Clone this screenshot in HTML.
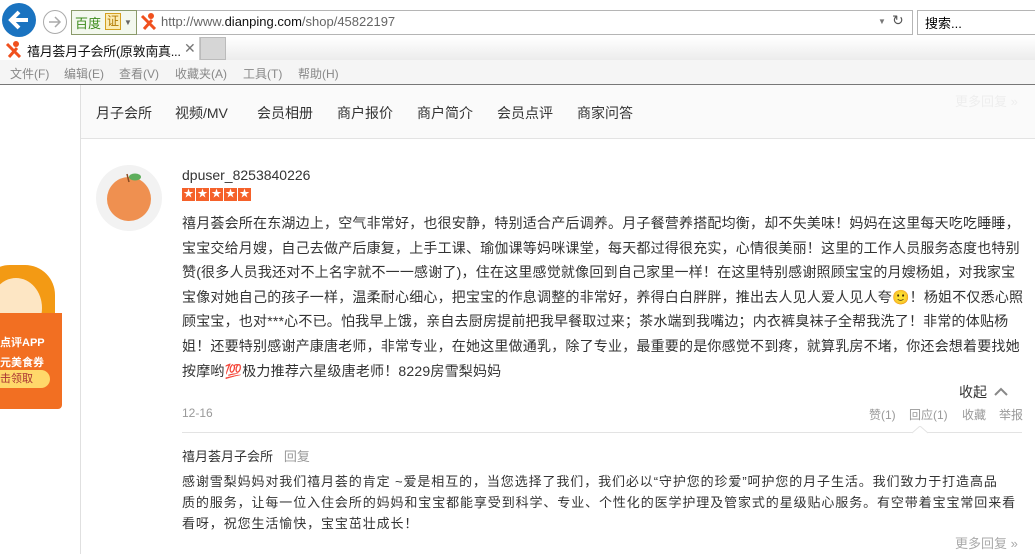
<!DOCTYPE html>
<html><head><meta charset="utf-8"><style>
body{margin:0;width:1035px;height:554px;overflow:hidden;background:#fff;font-family:"Liberation Sans","Noto Sans CJK SC",sans-serif;position:relative}
.a{position:absolute}
.cn{font-family:"Liberation Sans","Noto Sans CJK SC",sans-serif}
.nw{white-space:nowrap}
</style></head><body>
<!-- address bar -->
<div class="a" style="left:0;top:0;width:1035px;height:39px;background:#fff"></div>
<div class="a" style="left:2px;top:3px;width:34px;height:34px;border-radius:50%;background:#1a73c0"></div>
<svg class="a" style="left:2px;top:3px" width="34" height="34"><path d="M26 17H10M17 9l-8 8 8 8" stroke="#fff" stroke-width="4" fill="none"/></svg>
<div class="a" style="left:43px;top:10px;width:22px;height:22px;border-radius:50%;border:1px solid #aaa"></div>
<svg class="a" style="left:44px;top:11px" width="22" height="22"><path d="M5 11h11M11 6l5 5-5 5" stroke="#aaa" stroke-width="1.5" fill="none"/></svg>
<div class="a" style="left:71px;top:10px;width:840px;height:23px;border:1px solid #b5b5b5"></div>
<div class="a" style="left:71px;top:10px;width:64px;height:23px;border:1px solid #8a9a6a;background:#f3f8ee"></div>
<div class="a cn" style="left:75px;top:13px;font-size:13px;color:#3c8c1c">百度</div>
<div class="a cn" style="left:105px;top:13px;width:14px;height:15px;border:1px solid #d4a020;background:#fbecb4;font-size:12px;color:#b07800;text-align:center;line-height:15px">证</div>
<div class="a" style="left:124px;top:18px;font-size:8px;color:#666">▼</div>
<svg class="a" style="left:140px;top:12px" width="17" height="18"><circle cx="11" cy="4" r="3" fill="#f0501e"/><path d="M2 4l8 8M12 8l-8 9M10 12l5 5" stroke="#f0501e" stroke-width="3" fill="none"/></svg>
<div class="a" style="left:161px;top:14px;font-size:13px;color:#666">http://www.<span style="color:#111">dianping.com</span>/shop/45822197</div>
<div class="a" style="left:878px;top:17px;font-size:8px;color:#777">▼</div>
<div class="a" style="left:892px;top:12px;font-size:14px;color:#555">↻</div>
<div class="a" style="left:917px;top:10px;width:120px;height:23px;border:1px solid #b5b5b5"></div>
<div class="a cn" style="left:925px;top:13px;font-size:13px;color:#000">搜索...</div>
<!-- tabs -->
<div class="a" style="left:0;top:37px;width:1035px;height:23px;background:linear-gradient(#fff,#ececec)"></div>
<div class="a" style="left:0;top:37px;width:199px;height:23px;background:#fff;border-right:1px solid #ccc"></div>
<svg class="a" style="left:5px;top:40px" width="17" height="18"><circle cx="11" cy="4" r="3" fill="#f0501e"/><path d="M2 4l8 8M12 8l-8 9M10 12l5 5" stroke="#f0501e" stroke-width="3" fill="none"/></svg>
<div class="a cn nw" style="left:27px;top:41px;font-size:13px;letter-spacing:-0.3px;color:#111">禧月荟月子会所(原敦南真...</div>
<div class="a" style="left:184px;top:40px;font-size:14px;color:#777">✕</div>
<div class="a" style="left:200px;top:37px;width:26px;height:23px;background:#d6d6d6;border:1px solid #bbb;box-sizing:border-box"></div>
<!-- menu -->
<div class="a" style="left:0;top:60px;width:1035px;height:24px;background:#f5f5f5;border-bottom:1px solid #777"></div>
<div class="a cn" style="left:10px;top:65px;font-size:12px;color:#888">文件(F)</div>
<div class="a cn" style="left:64px;top:65px;font-size:12px;color:#888">编辑(E)</div>
<div class="a cn" style="left:119px;top:65px;font-size:12px;color:#888">查看(V)</div>
<div class="a cn" style="left:175px;top:65px;font-size:12px;color:#888">收藏夹(A)</div>
<div class="a cn" style="left:243px;top:65px;font-size:12px;color:#888">工具(T)</div>
<div class="a cn" style="left:298px;top:65px;font-size:12px;color:#888">帮助(H)</div>
<!-- page -->
<div class="a" style="left:80px;top:85px;width:1px;height:469px;background:#e0e0e0"></div>
<div class="a" style="left:81px;top:85px;width:954px;height:53px;background:#fafafa;border-bottom:1px solid #e3e3e3"></div>
<div class="a cn" style="left:955px;top:91px;font-size:13px;color:#eee">更多回复 »</div>
<div class="a cn" style="left:96px;top:103px;font-size:14px;color:#333">月子会所</div>
<div class="a cn" style="left:175px;top:103px;font-size:14px;color:#333">视频/MV</div>
<div class="a cn" style="left:257px;top:103px;font-size:14px;color:#333">会员相册</div>
<div class="a cn" style="left:337px;top:103px;font-size:14px;color:#333">商户报价</div>
<div class="a cn" style="left:417px;top:103px;font-size:14px;color:#333">商户简介</div>
<div class="a cn" style="left:497px;top:103px;font-size:14px;color:#333">会员点评</div>
<div class="a cn" style="left:577px;top:103px;font-size:14px;color:#333">商家问答</div>
<!-- ad -->
<div class="a" style="left:-20px;top:265px;width:75px;height:80px;border-radius:30px 30px 0 0;background:#f39a14"></div>
<div class="a" style="left:-10px;top:278px;width:52px;height:60px;border-radius:50%;background:#fde6c4"></div>
<div class="a" style="left:0;top:313px;width:62px;height:96px;background:#f26f22;border-radius:0 0 4px 0"></div>
<div class="a cn" style="left:0;top:333px;font-size:11px;font-weight:bold;color:#fff;line-height:20px">点评APP<br>元美食券</div>
<div class="a cn" style="left:0;top:370px;width:50px;height:18px;background:#ffd86a;border-radius:0 9px 9px 0;font-size:11px;color:#a33;line-height:18px">击领取</div>
<!-- avatar -->
<div class="a" style="left:96px;top:165px;width:66px;height:66px;border-radius:50%;background:#f2f2f2"></div>
<div class="a" style="left:107px;top:177px;width:44px;height:44px;border-radius:50%;background:#ef9050"></div>
<svg class="a" style="left:120px;top:170px" width="24" height="14"><path d="M9 12L7 4" stroke="#8a4a20" stroke-width="1.5"/><ellipse cx="15" cy="7" rx="6" ry="3.5" fill="#5eae5c"/></svg>
<div class="a" style="left:182px;top:167px;font-size:14px;color:#333">dpuser_8253840226</div>
<div class="a" style="left:182px;top:188px;display:flex;gap:1px">
<div style="width:13px;height:13px;background:#f5612a;color:#fff;font-size:10px;text-align:center;line-height:13px">★</div><div style="width:13px;height:13px;background:#f5612a;color:#fff;font-size:10px;text-align:center;line-height:13px">★</div><div style="width:13px;height:13px;background:#f5612a;color:#fff;font-size:10px;text-align:center;line-height:13px">★</div><div style="width:13px;height:13px;background:#f5612a;color:#fff;font-size:10px;text-align:center;line-height:13px">★</div><div style="width:13px;height:13px;background:#f5612a;color:#fff;font-size:10px;text-align:center;line-height:13px">★</div></div>
<div class="a cn nw" style="left:182px;top:211px;font-size:14px;line-height:24.6px;letter-spacing:0.2px;color:#333">禧月荟会所在东湖边上，空气非常好，也很安静，特别适合产后调养。月子餐营养搭配均衡，却不失美味！妈妈在这里每天吃吃睡睡，<br>宝宝交给月嫂，自己去做产后康复，上手工课、瑜伽课等妈咪课堂，每天都过得很充实，心情很美丽！这里的工作人员服务态度也特别<br>赞(很多人员我还对不上名字就不一一感谢了)，住在这里感觉就像回到自己家里一样！在这里特别感谢照顾宝宝的月嫂杨姐，对我家宝<br>宝像对她自己的孩子一样，温柔耐心细心，把宝宝的作息调整的非常好，养得白白胖胖，推出去人见人爱人见人夸🙂！杨姐不仅悉心照<br>顾宝宝，也对***心不已。怕我早上饿，亲自去厨房提前把我早餐取过来；茶水端到我嘴边；内衣裤臭袜子全帮我洗了！非常的体贴杨<br>姐！还要特别感谢产康唐老师，非常专业，在她这里做通乳，除了专业，最重要的是你感觉不到疼，就算乳房不堵，你还会想着要找她<br>按摩哟💯极力推荐六星级唐老师！8229房雪梨妈妈</div>
<div class="a cn" style="left:959px;top:382px;font-size:14px;color:#333">收起</div>
<svg class="a" style="left:993px;top:386px" width="16" height="10"><path d="M2 9l6-6 6 6" stroke="#888" stroke-width="2" fill="none"/></svg>
<div class="a" style="left:182px;top:406px;font-size:12px;color:#999">12-16</div>
<div class="a cn" style="left:869px;top:406px;font-size:12px;color:#999">赞(1)</div>
<div class="a cn" style="left:909px;top:406px;font-size:12px;color:#999">回应(1)</div>
<div class="a cn" style="left:962px;top:406px;font-size:12px;color:#999">收藏</div>
<div class="a cn" style="left:999px;top:406px;font-size:12px;color:#999">举报</div>
<div class="a" style="left:182px;top:432px;width:840px;height:1px;background:#e3e3e3"></div>
<svg class="a" style="left:912px;top:426px" width="16" height="8"><path d="M0 7L8 0l8 7" stroke="#e3e3e3" fill="#fff"/></svg>
<div class="a cn" style="left:182px;top:446px;font-size:13px;color:#333">禧月荟月子会所&nbsp;&nbsp;&nbsp;<span style="color:#999">回复</span></div>
<div class="a cn nw" style="left:182px;top:471px;font-size:13px;line-height:21px;letter-spacing:0.9px;color:#333">感谢雪梨妈妈对我们禧月荟的肯定 ~爱是相互的，当您选择了我们，我们必以“守护您的珍爱”呵护您的月子生活。我们致力于打造高品<br>质的服务，让每一位入住会所的妈妈和宝宝都能享受到科学、专业、个性化的医学护理及管家式的星级贴心服务。有空带着宝宝常回来看<br>看呀，祝您生活愉快，宝宝茁壮成长！</div>
<div class="a cn" style="left:955px;top:533px;font-size:13px;color:#aaa">更多回复 »</div>
</body></html>
